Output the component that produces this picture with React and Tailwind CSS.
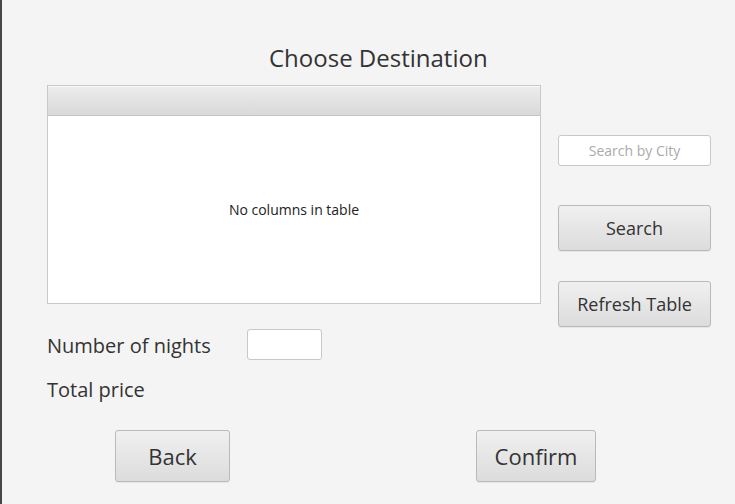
import React from 'react'

const font = { fontFamily: '"Open Sans", "Noto Sans", sans-serif' }

const Button = ({ children, className }) => (
  <button
    className={`rounded-[3px] border border-[#b9b9b9] bg-gradient-to-b from-[#f0f0f0] to-[#dcdcdc] text-[#333] shadow-[0_1px_0_#e6e6e6] ${className}`}
  >
    {children}
  </button>
)

export default function App() {
  return (
    <div className="w-[735px] h-[504px] bg-[#f4f4f4] border-l-2 border-[#464646] text-[#333] overflow-hidden" style={font}>
      {/* Title */}
      <div className="pt-[42px] pl-[267px] h-[85px]">
        <h1 className="text-[24px] leading-[32px]">Choose Destination</h1>
      </div>

      {/* Table + side controls */}
      <div className="flex">
        <div className="ml-[45px] w-[494px] h-[219px] border border-[#c8c8c8] bg-white flex flex-col">
          <div className="h-[30px] bg-gradient-to-b from-[#ececec] to-[#d9d9d9] border-b border-[#c4c4c4] border-t border-t-[#fafafa]" />
          <div className="flex-1 flex items-center justify-center text-[14px] text-[#222]">
            No columns in table
          </div>
        </div>

        <div className="ml-[17px] w-[153px] flex flex-col pt-[50px]">
          <div className="h-[31px] rounded-[3px] border border-[#c8c8c8] bg-white flex items-center justify-center text-[14px] text-[#aaa]">
            Search by City
          </div>
          <Button className="mt-[39px] h-[46px] text-[18px]">Search</Button>
          <Button className="mt-[30px] h-[46px] text-[18px]">Refresh Table</Button>
        </div>
      </div>

      {/* Form rows */}
      <div className="mt-[2px] pl-[45px] flex items-center h-[31px]">
        <span className="text-[20px] w-[200px] pt-[2px]">Number of nights</span>
        <div className="w-[75px] h-[31px] rounded-[3px] border border-[#c8c8c8] bg-white" />
      </div>
      <div className="flex items-center pl-[45px] mt-[15px] h-[30px]">
        <span className="text-[20px]">Total price</span>
      </div>

      {/* Bottom buttons */}
      <div className="flex mt-[25px]">
        <Button className="ml-[113px] w-[115px] h-[52px] text-[22px]">Back</Button>
        <Button className="ml-[246px] w-[120px] h-[52px] text-[22px]">Confirm</Button>
      </div>
    </div>
  )
}
